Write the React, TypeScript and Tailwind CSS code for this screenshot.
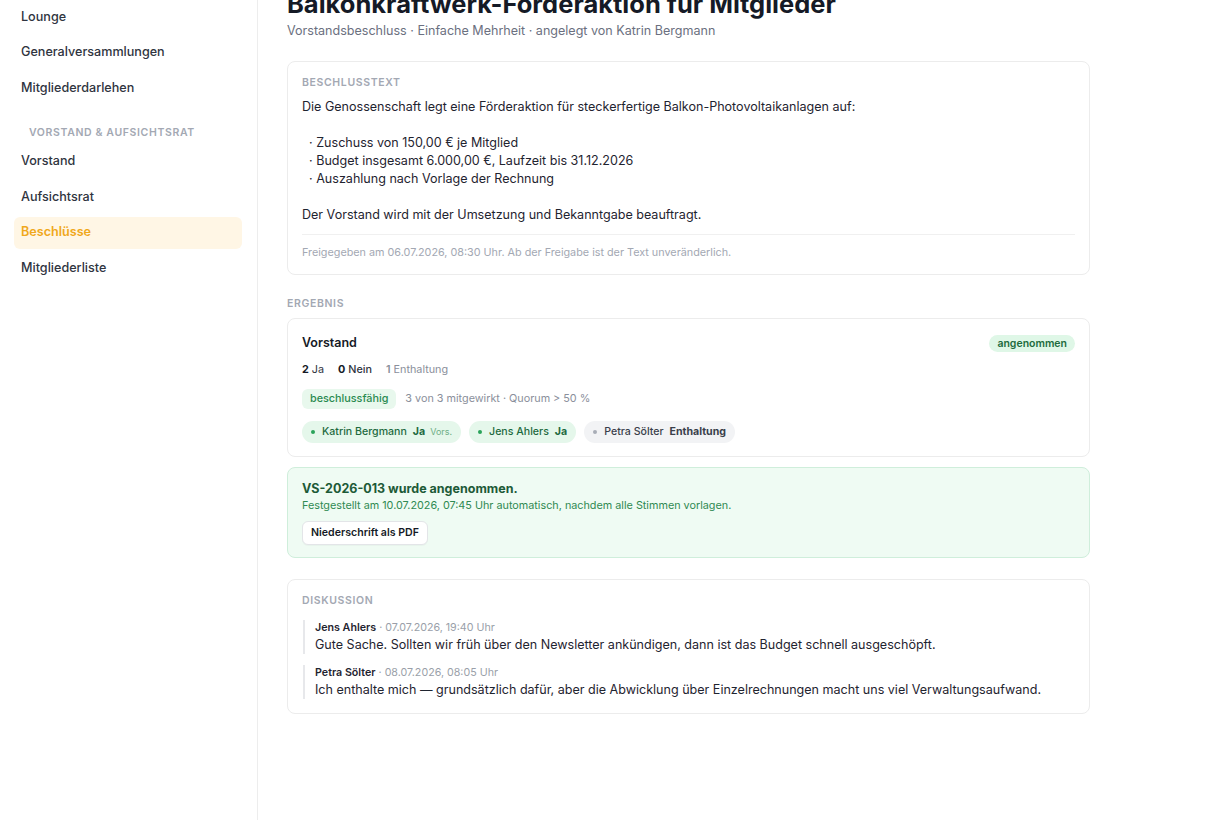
type NavItem = { label: string; active?: boolean };

const topNav: NavItem[] = [
  { label: 'Lounge' },
  { label: 'Generalversammlungen' },
  { label: 'Mitgliederdarlehen' },
];

const boardNav: NavItem[] = [
  { label: 'Vorstand' },
  { label: 'Aufsichtsrat' },
  { label: 'Beschlüsse', active: true },
  { label: 'Mitgliederliste' },
];

type Vote = { name: string; vote: string; chair?: boolean; tone: 'yes' | 'abstain' };

const votes: Vote[] = [
  { name: 'Katrin Bergmann', vote: 'Ja', chair: true, tone: 'yes' },
  { name: 'Jens Ahlers', vote: 'Ja', tone: 'yes' },
  { name: 'Petra Sölter', vote: 'Enthaltung', tone: 'abstain' },
];

const comments = [
  {
    author: 'Jens Ahlers',
    date: '07.07.2026, 19:40 Uhr',
    text: 'Gute Sache. Sollten wir früh über den Newsletter ankündigen, dann ist das Budget schnell ausgeschöpft.',
  },
  {
    author: 'Petra Sölter',
    date: '08.07.2026, 08:05 Uhr',
    text: 'Ich enthalte mich — grundsätzlich dafür, aber die Abwicklung über Einzelrechnungen macht uns viel Verwaltungsaufwand.',
  },
];

const resolutionText = `Die Genossenschaft legt eine Förderaktion für steckerfertige Balkon-Photovoltaikanlagen auf:

  · Zuschuss von 150,00 € je Mitglied
  · Budget insgesamt 6.000,00 €, Laufzeit bis 31.12.2026
  · Auszahlung nach Vorlage der Rechnung

Der Vorstand wird mit der Umsetzung und Bekanntgabe beauftragt.`;

function NavLink({ item }: { item: NavItem }) {
  return (
    <a
      href="#"
      className={`flex h-8 items-center rounded-md px-[7px] text-[12.6px] ${
        item.active ? 'bg-[#fff6e5] font-semibold text-[#f0a81c]' : 'font-medium text-[#2f3440]'
      }`}
    >
      {item.label}
    </a>
  );
}

function SectionLabel({ children }: { children: string }) {
  return (
    <div className="text-[10.5px] font-semibold uppercase leading-[14px] tracking-[0.06em] text-[#a3a8b3]">
      {children}
    </div>
  );
}

export default function App() {
  return (
    <div
      className="flex min-h-screen overflow-hidden bg-white text-[#1f2430]"
      style={{ fontFamily: 'Inter, "Noto Sans", sans-serif' }}
    >
      <aside className="flex w-[258px] shrink-0 flex-col gap-[3.8px] border-r border-[#ededed] pl-[14px] pr-[15px] pt-px">
        {topNav.map((item) => (
          <NavLink key={item.label} item={item} />
        ))}
        <div className="px-[15px] pt-[17px] text-[10.5px] font-semibold uppercase leading-4 tracking-[0.06em] text-[#a3a8b3]">
          Vorstand &amp; Aufsichtsrat
        </div>
        {boardNav.map((item) => (
          <NavLink key={item.label} item={item} />
        ))}
      </aside>

      <main className="flex-1 pl-[29px]">
        <div className="w-[803px]">
          <h1 className="mt-[-12px] text-[25.5px] font-bold leading-8 text-[#151a26]">
            Balkonkraftwerk-Förderaktion für Mitglieder
          </h1>
          <p className="pt-px text-[12.55px] leading-5 text-[#6b7080]">
            Vorstandsbeschluss · Einfache Mehrheit · angelegt von Katrin Bergmann
          </p>

          <section className="mt-[20px] rounded-lg border border-[#ececec] px-[14px] pb-[13px] pt-[14px]">
            <SectionLabel>Beschlusstext</SectionLabel>
            <p className="mt-[8px] whitespace-pre-wrap text-[12.55px] leading-[18px] text-[#1f2430]">{resolutionText}</p>
            <div className="mt-[10px] border-t border-[#f0f0f0] pt-[10px] text-[10.8px] leading-4 text-[#a3a8b3]">
              Freigegeben am 06.07.2026, 08:30 Uhr. Ab der Freigabe ist der Text unveränderlich.
            </div>
          </section>

          <div className="mt-[22px] mb-[7px]">
            <SectionLabel>Ergebnis</SectionLabel>
          </div>

          <section className="rounded-lg border border-[#ececec] px-[14px] pb-[13px] pt-[15px]">
            <div className="flex h-[18px] items-center justify-between">
              <h2 className="text-[12.5px] font-semibold text-[#151a26]">Vorstand</h2>
              <span className="rounded-full bg-[#dff7e7] px-2 py-[1px] text-[10.5px] font-semibold leading-[15px] text-[#1d6b3e]">
                angenommen
              </span>
            </div>
            <div className="mt-[10px] flex gap-[14px] text-[10.8px] leading-4">
              <span className="text-[#2f3440]">
                <b className="font-bold text-[#151a26]">2</b> Ja
              </span>
              <span className="font-medium text-[#2f3440]">
                <b className="font-bold text-[#151a26]">0</b> Nein
              </span>
              <span className="text-[#8a8f9b]">
                <b className="font-semibold">1</b> Enthaltung
              </span>
            </div>
            <div className="mt-[11px] flex items-center gap-[9px] text-[10.8px] leading-5">
              <span className="rounded-md bg-[#e8f8ed] px-2 font-medium text-[#2a8a50]">beschlussfähig</span>
              <span className="text-[#8a8f9b]">3 von 3 mitgewirkt · Quorum &gt; 50 %</span>
            </div>
            <div className="mt-3 flex gap-2">
              {votes.map((v) => (
                <span
                  key={v.name}
                  className={`flex h-[22px] items-center gap-[5px] rounded-full px-[9px] text-[10.6px] font-medium ${
                    v.tone === 'yes' ? 'bg-[#e5f7eb] text-[#1e6a3f]' : 'bg-[#f2f3f5] text-[#3a3f4b]'
                  }`}
                >
                  <span
                    className={`mr-[2px] h-1 w-1 rounded-full ${v.tone === 'yes' ? 'bg-[#2aa35a]' : 'bg-[#a8adb6]'}`}
                  />
                  <span>{v.name}</span>
                  <span className="ml-[1px] font-bold">{v.vote}</span>
                  {v.chair && <span className="text-[9px] font-normal text-[#6fae86]">Vors.</span>}
                </span>
              ))}
            </div>
          </section>

          <section className="mt-[10px] rounded-lg border border-[#cfeedb] bg-[#effbf3] px-[14px] pb-[12px] pt-[12px]">
            <div className="text-[12.5px] font-bold leading-[18px] text-[#1d5a37]">VS-2026-013 wurde angenommen.</div>
            <div className="text-[10.8px] leading-4 text-[#2f8a52]">
              Festgestellt am 10.07.2026, 07:45 Uhr automatisch, nachdem alle Stimmen vorlagen.
            </div>
            <button
              type="button"
              className="mt-[7px] h-6 rounded-md border border-[#e3e5e8] bg-white px-[8px] text-[10.6px] font-semibold text-[#151a26] shadow-[0_1px_1px_rgba(0,0,0,0.03)]"
            >
              Niederschrift als PDF
            </button>
          </section>

          <section className="mt-[21px] rounded-lg border border-[#ececec] px-[14px] pb-[14px] pt-[14px]">
            <SectionLabel>Diskussion</SectionLabel>
            <div className="mt-3 flex flex-col gap-[11px]">
              {comments.map((c) => (
                <div key={c.author} className="ml-px border-l-2 border-[#e7e8eb] pl-[10px]">
                  <div className="text-[10.7px] leading-4">
                    <span className="font-semibold text-[#1f2430]">{c.author}</span>
                    <span className="text-[#9a9fa9]"> · {c.date}</span>
                  </div>
                  <p className="text-[12.55px] leading-[18px] text-[#1f2430]">{c.text}</p>
                </div>
              ))}
            </div>
          </section>
        </div>
      </main>
    </div>
  );
}
